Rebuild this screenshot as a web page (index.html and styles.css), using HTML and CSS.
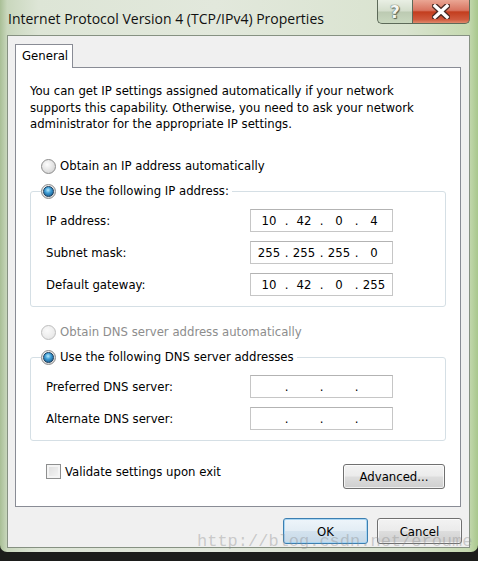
FILE: index.html
```html
<!DOCTYPE html>
<html lang="en">
<head>
    <meta charset="UTF-8">
    <meta name="viewport" content="width=device-width, initial-scale=1.0">
    <title>Internet Protocol Version 4 (TCP/IPv4) Properties</title>
    <link rel="stylesheet" href="styles.css">
</head>
<body>
    <div class="window">
        <div class="titlebar">
            <span class="title">Internet Protocol Version 4 (TCP/IPv4) Properties</span>
            <div class="caption">
                <span class="cap help">?</span>
                <span class="cap close">
                    <svg width="18" height="15" viewBox="0 0 18 15">
                        <path d="M3 2 L15 13 M15 2 L3 13" stroke="#4a2a24" stroke-width="6" stroke-linecap="square"/>
                        <path d="M3 2 L15 13 M15 2 L3 13" stroke="#fff" stroke-width="3.4" stroke-linecap="square"/>
                    </svg>
                </span>
            </div>
        </div>

        <div class="client">
            <div class="tabs"><span class="tab">General</span></div>
            <div class="page">
                <p class="intro">You can get IP settings assigned automatically if your network<br>supports this capability. Otherwise, you need to ask your network<br>administrator for the appropriate IP settings.</p>

                <div class="option first"><span class="radio"></span>Obtain an IP address automatically</div>
                <fieldset class="group">
                    <legend class="option"><span class="radio checked"></span>Use the following IP address:</legend>
                    <div class="row">
                        <span>IP address:</span>
                        <span class="ipbox"><b>10</b><i>.</i><b>42</b><i>.</i><b>0</b><i>.</i><b>4</b></span>
                    </div>
                    <div class="row">
                        <span>Subnet mask:</span>
                        <span class="ipbox"><b>255</b><i>.</i><b>255</b><i>.</i><b>255</b><i>.</i><b>0</b></span>
                    </div>
                    <div class="row">
                        <span>Default gateway:</span>
                        <span class="ipbox"><b>10</b><i>.</i><b>42</b><i>.</i><b>0</b><i>.</i><b>255</b></span>
                    </div>
                </fieldset>

                <div class="option disabled"><span class="radio"></span>Obtain DNS server address automatically</div>
                <fieldset class="group">
                    <legend class="option"><span class="radio checked"></span>Use the following DNS server addresses</legend>
                    <div class="row">
                        <span>Preferred DNS server:</span>
                        <span class="ipbox"><b></b><i>.</i><b></b><i>.</i><b></b><i>.</i><b></b></span>
                    </div>
                    <div class="row">
                        <span>Alternate DNS server:</span>
                        <span class="ipbox"><b></b><i>.</i><b></b><i>.</i><b></b><i>.</i><b></b></span>
                    </div>
                </fieldset>

                <div class="footer">
                    <div class="check"><span class="box"></span>Validate settings upon exit</div>
                    <button class="btn advanced">Advanced...</button>
                </div>
            </div>

            <div class="buttons">
                <button class="btn default">OK</button>
                <button class="btn">Cancel</button>
            </div>
        </div>

        <div class="watermark">http://blog.csdn.net/eroume</div>
    </div>
</body>
</html>
```

FILE: styles.css
```css
*{
    margin: 0;
    padding: 0;
    box-sizing: border-box;
}
body{
    width: 478px;
    height: 561px;
    background: #1c1d1b;
    font-family: "DejaVu Sans Condensed", "DejaVu Sans", sans-serif;
    font-size: 13px;
    color: #000;
    overflow: hidden;
}
.window{
    position: relative;
    width: 478px;
    height: 552px;
    padding: 0 8px 4px 7px;
    display: flex;
    flex-direction: column;
    border-radius: 0 0 7px 7px;
    background: linear-gradient(to right, #a9bf96 0, #c9d7bd 1.5%, #dde5d6 8%, #e2e8dc 45%, #d9e3cf 85%, #c6dab1 98%, #a9c78c 100%);
}

/* title bar */
.titlebar{
    height: 35px;
    display: flex;
    justify-content: space-between;
}
.title{
    padding: 10px 0 0 1px;
    font-family: "Open Sans", "Noto Sans", sans-serif;
    font-size: 14px;
    line-height: 18px;
    color: #111;
}
.caption{
    display: flex;
    height: 24px;
}
.cap{
    display: flex;
    align-items: center;
    justify-content: center;
    height: 24px;
    border: 1px solid #5d6a59;
    border-top: 0;
}
.help{
    width: 35px;
    border-radius: 0 0 0 5px;
    border-right: 0;
    background: linear-gradient(#e9efe4, #d3ddcb 48%, #bccab2 52%, #c9d8bf);
    font-family: "DejaVu Sans", sans-serif;
    font-weight: bold;
    font-size: 17px;
    color: #f4f6f2;
    text-shadow: 0 0 1px #5b6556, 0 0 1px #5b6556, 1px 1px 1px #5b6556;
}
.close{
    width: 58px;
    border-radius: 0 0 5px 0;
    background: linear-gradient(#eaa694, #d87460 45%, #c33d1e 52%, #cf5a3e 85%, #e08a6c);
}

/* dialog client area */
.client{
    height: 513px;
    border: 1px solid #869182;
    background: #f0f0f0;
    padding: 8px 8px 0 7px;
}
.tabs{
    display: flex;
    height: 23px;
}
.tab{
    position: relative;
    width: 58px;
    height: 24px;
    border: 1px solid #898c95;
    border-bottom: 0;
    background: #fff;
    padding-left: 6px;
    line-height: 22px;
    z-index: 1;
}
.page{
    height: 440px;
    border: 1px solid #898c95;
    background: #fff;
    padding: 15px 14px 0 14px;
}
.intro{
    line-height: 16.5px;
}
.option{
    display: flex;
    align-items: center;
    height: 16px;
    line-height: 16px;
}
.option.first{
    margin-top: 25.5px;
    padding-left: 11px;
}
.option.disabled{
    margin-top: 17px;
    padding-left: 11px;
    color: #8d8d8d;
}
.radio{
    width: 15px;
    height: 15px;
    margin-right: 4px;
    border: 1px solid #8b8b8b;
    border-radius: 50%;
    background: radial-gradient(circle at 40% 35%, #fdfdfd 0, #e2e2e2 55%, #c9c9c9 100%);
    display: flex;
    align-items: center;
    justify-content: center;
}
.disabled .radio{
    border-color: #bdbdbd;
    background: radial-gradient(circle at 40% 35%, #fafafa 0, #ececec 60%, #dcdcdc 100%);
}
.radio.checked::after{
    content: "";
    width: 9px;
    height: 9px;
    border-radius: 50%;
    border: 1px solid #183b5a;
    background: radial-gradient(circle at 45% 35%, #b6ecff 0, #3c9bd4 40%, #104a7a 100%);
}

.group{
    margin-top: 9px;
    border: 1px solid #d5dfe5;
    border-radius: 3px;
    padding: 10px 15px 10px 15px;
    display: flex;
    flex-direction: column;
    gap: 9px;
}
.group legend{
    margin-left: -5px;
    padding-right: 3px;
}
.row{
    display: grid;
    grid-template-columns: 204px 143px;
    align-items: center;
    height: 23px;
}
.ipbox{
    display: flex;
    height: 23px;
    border: 1px solid #c6c6c6;
    border-top-color: #b3b3b3;
    background: #fff;
    padding-left: 5px;
    line-height: 21px;
}
.ipbox b{
    width: 26px;
    font-weight: normal;
    text-align: center;
}
.ipbox i{
    width: 9px;
    font-style: normal;
    text-align: center;
}

.footer{
    margin-top: 22px;
    display: flex;
    justify-content: space-between;
    align-items: flex-start;
}
.check{
    display: flex;
    align-items: center;
    height: 16px;
    padding-left: 16px;
}
.box{
    width: 15px;
    height: 15px;
    margin-right: 4px;
    border: 1px solid #8e8f8f;
    background: linear-gradient(135deg, #dcdcdc, #f6f6f6);
    box-shadow: inset 0 0 0 2px #f4f4f4;
}

.btn{
    font: inherit;
    color: #000;
    height: 26px;
    border: 1px solid #707070;
    border-radius: 3px;
    background: linear-gradient(#f3f3f3, #ebebeb 48%, #dddddd 52%, #cfcfcf);
    box-shadow: inset 0 0 0 1px rgba(255, 255, 255, 0.7);
}
.btn.advanced{
    width: 102px;
    height: 25px;
    margin: 1px 1px 0 0;
}
.buttons{
    margin-top: 11px;
    display: flex;
    justify-content: flex-end;
    gap: 9px;
    margin-right: -1px;
}
.buttons .btn{
    width: 85px;
}
.btn.default{
    border-color: #3c7fb1;
    background: linear-gradient(#eef5fa, #e3edf5 48%, #d3e2ee 52%, #c6d9e8);
    box-shadow: inset 0 0 0 1px #a9d6f3;
}

.watermark{
    position: absolute;
    left: 197px;
    top: 532px;
    font-family: "Liberation Mono", monospace;
    font-size: 17px;
    color: rgba(140, 140, 140, 0.4);
    white-space: nowrap;
}
```
